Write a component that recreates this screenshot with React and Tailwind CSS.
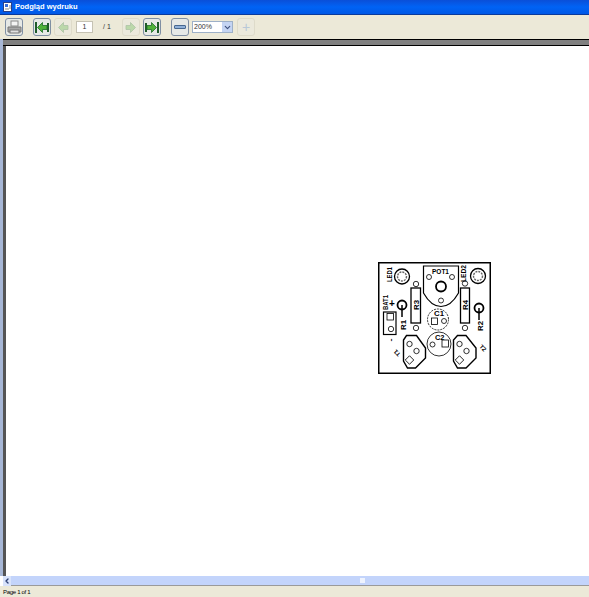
import React from 'react';
import { ChevronDown, ChevronLeft } from 'lucide-react';

// Toolbar button, raised when enabled and washed out when disabled
const ToolButton = ({ left, active, children }) => (
  <div
    className={`w-[18px] h-[18px] flex items-center justify-center rounded-[3px] border ${
      active ? 'border-[#7f8fa3] bg-[#e6e9e6]' : 'border-[#dedbca] bg-[#ebe9dc]'
    } ${left}`}
  >
    {children}
  </div>
);

const PrinterIcon = () => (
  <svg width="15" height="15" viewBox="0 0 15 15">
    <rect x="4" y="1" width="7" height="5" fill="#f4f4f4" stroke="#8a8a8a" />
    <path d="M1 7h13v5H1z" fill="#a8a8a8" stroke="#777" />
    <rect x="3" y="10" width="9" height="3" fill="#e0e0e0" stroke="#777" />
  </svg>
);

const ArrowIcon = ({ flip, edge, faded }) => (
  <svg width="14" height="13" viewBox="0 0 14 13" className={`${flip ? '-scale-x-100' : ''} ${faded ? 'opacity-30' : ''}`}>
    {edge && <rect x="0" y="1" width="2" height="11" fill="#1e5b2a" />}
    {edge && <rect x="12" y="2" width="2" height="9" fill="#1e5b2a" />}
    <path d="M2.5 6.5L7.5 1.5v3h4.5v4H7.5v3z" fill="#4fb23a" stroke="#1f6b2a" strokeWidth="0.8" />
  </svg>
);

// Rotated silkscreen label, squeezed to the length it has on the board
const VLabel = ({ x, y, len, size = 7, children }) => (
  <text transform={`translate(${x} ${y}) rotate(-90)`} fontSize={size} textLength={len} lengthAdjust="spacingAndGlyphs">
    {children}
  </text>
);

// PCB silkscreen, drawn in the board's own coordinates
const Board = () => (
  <svg width="113" height="112" viewBox="0 0 113 112" className="block" fontFamily="'Liberation Sans', sans-serif" fontWeight="700">
    <rect x="0.75" y="0.75" width="111.5" height="110.5" fill="#fff" stroke="#000" strokeWidth="1.5" />
    <g fill="none" stroke="#000" strokeWidth="0.8">
      {/* LEDs */}
      <circle cx="24" cy="14.5" r="7.5" strokeWidth="1.3" />
      <circle cx="24" cy="14.5" r="4.5" stroke="#666" strokeWidth="1.4" strokeDasharray="2 1" />
      <circle cx="100" cy="14" r="7.5" strokeWidth="1.3" />
      <circle cx="100" cy="14" r="4.5" stroke="#666" strokeWidth="1.4" strokeDasharray="2 1" />

      {/* POT1 */}
      <path d="M45.5 4H80.5V31C76 39 70 44.5 63 44.5C56 44.5 50 39 45.5 31Z" strokeWidth="1.2" />
      <circle cx="63" cy="24.5" r="5" strokeWidth="1.8" />
      <circle cx="51" cy="15" r="2.5" />
      <circle cx="74" cy="15" r="2.5" />
      <circle cx="63" cy="38.5" r="2.5" />

      {/* R3, R4 */}
      <rect x="33" y="26" width="9.5" height="35" strokeWidth="1.3" />
      <circle cx="38" cy="22" r="2.7" />
      <circle cx="38" cy="66" r="2.7" />
      <rect x="82.5" y="26" width="9" height="35" strokeWidth="1.3" />
      <circle cx="87" cy="21.5" r="2.7" />
      <circle cx="87" cy="66" r="2.7" />

      {/* R1, R2 */}
      <circle cx="24" cy="43" r="4.5" strokeWidth="1.8" />
      <path d="M24 43V55" strokeWidth="1.5" />
      <circle cx="101" cy="46" r="4.5" strokeWidth="1.8" />
      <path d="M101 46V58" strokeWidth="1.5" />

      {/* BAT1 */}
      <rect x="5.5" y="50" width="12.5" height="22.5" strokeWidth="1.2" />
      <rect x="9" y="51.5" width="6.5" height="6.5" />
      <circle cx="13" cy="67" r="2.7" />

      {/* C1, C2 */}
      <circle cx="60" cy="57.5" r="10.5" strokeDasharray="2 1" />
      <rect x="53.5" y="56" width="6" height="6.5" />
      <circle cx="66" cy="59" r="2.5" />
      <circle cx="61" cy="82" r="12" />
      <circle cx="54.5" cy="82.5" r="2.5" />
      <rect x="64" y="78" width="6.5" height="7" />

      {/* Transistors */}
      <path d="M28.5 73.5H38.5L47.5 86V96L37.5 106H29.5L25.5 99V78Z" strokeWidth="1.4" />
      <circle cx="31.5" cy="82" r="2.7" />
      <circle cx="38.5" cy="89" r="2.7" />
      <rect x="28.5" y="95" width="6" height="6" transform="rotate(45 31.5 98)" />
      <path d="M79.5 73.5H88L98 86V96L88 106H79.5L75.5 99V78Z" strokeWidth="1.4" />
      <circle cx="81.5" cy="82" r="2.7" />
      <circle cx="88.5" cy="89" r="2.7" />
      <rect x="78.5" y="95" width="6" height="6" transform="rotate(45 81.5 98)" />
    </g>
    <g fill="#000">
      <VLabel x={13.5} y={20} len={15}>LED1</VLabel>
      <VLabel x={88} y={20} len={17}>LED2</VLabel>
      <text x="54" y="11.5" fontSize="7" textLength="17" lengthAdjust="spacingAndGlyphs">POT1</text>
      <VLabel x={10} y={48} len={15}>BAT1</VLabel>
      <text x="11" y="44.5" fontSize="10">+</text>
      <VLabel x={15} y={79.5} len={3} size={8}>-</VLabel>
      <VLabel x={27.5} y={68} len={10} size={8}>R1</VLabel>
      <VLabel x={40.5} y={48} len={10} size={8}>R3</VLabel>
      <VLabel x={90} y={48} len={10} size={8}>R4</VLabel>
      <VLabel x={105} y={69} len={10} size={8}>R2</VLabel>
      <text x="56" y="54" fontSize="7" textLength="10" lengthAdjust="spacingAndGlyphs">C1</text>
      <text x="57" y="78" fontSize="7" textLength="9.5" lengthAdjust="spacingAndGlyphs">C2</text>
      <text transform="translate(23 92) rotate(-135)" fontSize="6">T1</text>
      <text transform="translate(101 85) rotate(45)" fontSize="6">T2</text>
    </g>
  </svg>
);

export default function App() {
  return (
    <div className="w-[589px] h-[597px] flex flex-col overflow-hidden bg-[#ece9d8] font-['Liberation_Sans',sans-serif]">
      {/* Title bar */}
      <div className="h-[15px] flex items-center gap-[2px] pl-[3px] bg-gradient-to-b from-[#0a4fd8] via-[#0063f5] to-[#0058e6] border-b border-[#0a3a9c]">
        <svg width="10" height="10" viewBox="0 0 10 10">
          <rect x="0.5" y="0.5" width="8" height="9" fill="#fff" stroke="#27408b" />
          <rect x="2" y="2" width="3" height="3" fill="#3a6fd8" />
          <path d="M6 4h2M6 6h2M2 7h4" stroke="#555" strokeWidth="0.7" />
        </svg>
        <span className="text-[7.5px] font-bold leading-none text-white">Podgląd wydruku</span>
      </div>

      {/* Toolbar */}
      <div className="h-[24px] flex items-center pl-[5px] text-[7px] text-[#333]">
        <ToolButton active><PrinterIcon /></ToolButton>
        <ToolButton active left="ml-[10px]"><ArrowIcon edge /></ToolButton>
        <ToolButton left="ml-[3px]"><ArrowIcon faded /></ToolButton>
        <div className="ml-[4px] w-[17px] h-[12px] bg-white border border-[#c5c2b3] flex items-center justify-center">1</div>
        <span className="ml-[10px] w-[19px]">/ 1</span>
        <ToolButton><ArrowIcon flip faded /></ToolButton>
        <ToolButton active left="ml-[3px]"><ArrowIcon flip edge /></ToolButton>
        <ToolButton active left="ml-[10px]">
          <div className="w-[12px] h-[4px] rounded-[1px] bg-[#8fb0d8] border border-[#47688f]" />
        </ToolButton>
        <div className="ml-[3px] w-[41px] h-[12px] bg-white border border-[#9db0c8] flex items-center justify-between pl-[1px]">
          <span>200%</span>
          <div className="w-[10px] h-[10px] bg-[#c4d4f3] flex items-center justify-center">
            <ChevronDown size={9} strokeWidth={3} className="text-[#3c4f7c]" />
          </div>
        </div>
        <ToolButton left="ml-[4px]">
          <span className="text-[14px] leading-none text-[#b9c8d8]">+</span>
        </ToolButton>
      </div>

      {/* Preview area */}
      <div className="flex-1 flex min-h-0">
        <div className="w-[3px] bg-[#a7b7d6]" />
        <div className="flex-1 flex flex-col min-w-0">
          <div className="h-[7px] bg-[#808080] border-y border-black" />
          <div className="flex-1 flex min-h-0">
            <div className="w-[3px] bg-[#555]" />
            <div className="flex-1 bg-white pl-[372px] pt-[216px]">
              <Board />
            </div>
          </div>
        </div>
      </div>

      {/* Horizontal scrollbar */}
      <div className="h-[10px] flex items-center bg-[#c3d4fb] border-b border-[#9a9a9a]">
        <div className="w-[3px] h-[10px] bg-white" />
        <div className="w-[8px] h-[10px] flex items-center justify-center bg-[#d8e3fb]">
          <ChevronLeft size={8} strokeWidth={4} className="text-[#2b3f72]" />
        </div>
        <div className="ml-[349px] w-[5px] h-[5px] bg-[#eef3fe]" />
      </div>

      {/* Status bar */}
      <div className="h-[11px] flex items-center pl-[3px] text-[6px] tracking-[-0.3px] leading-none text-black">Page 1 of 1</div>
    </div>
  );
}
